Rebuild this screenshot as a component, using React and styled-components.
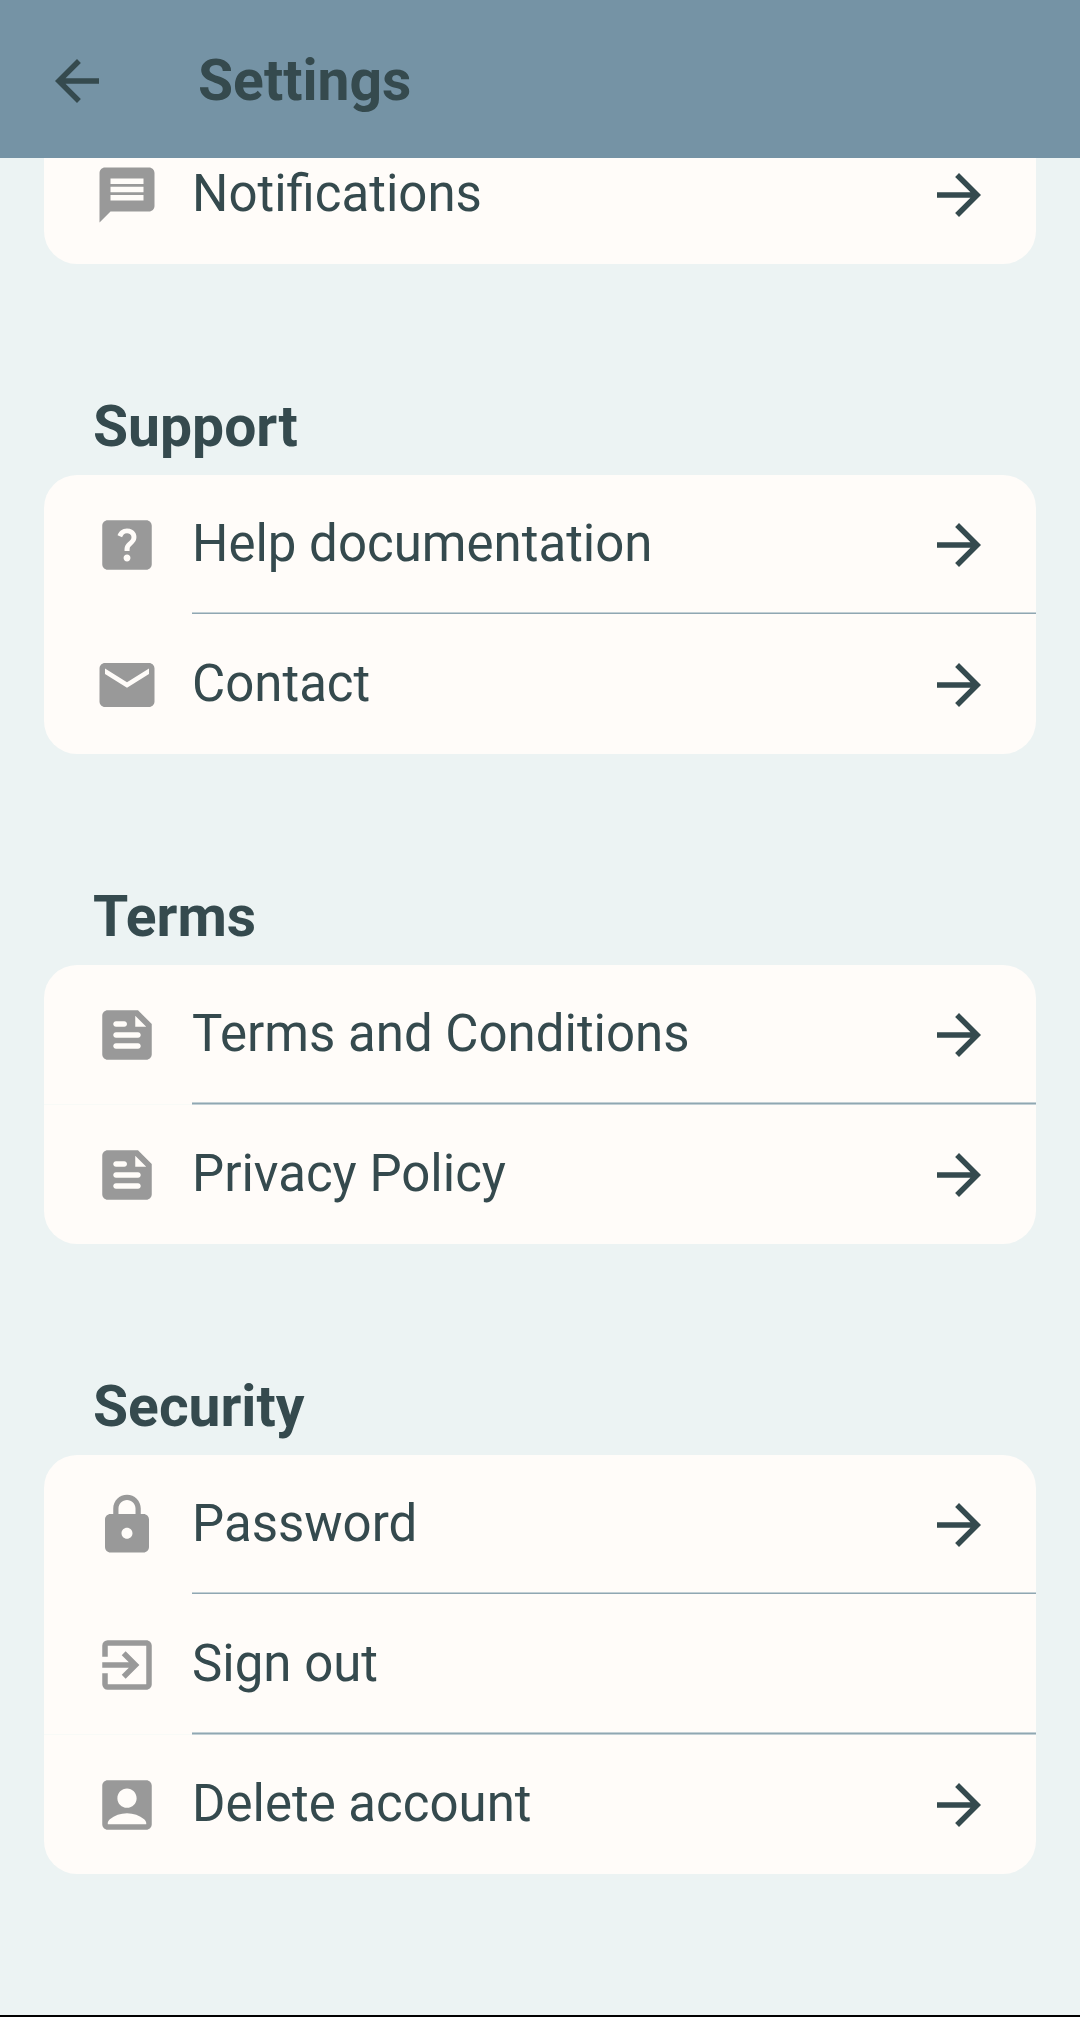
import React from 'react';
import styled, { createGlobalStyle } from 'styled-components';
import {
  MdAccountBox,
  MdArrowBack,
  MdArrowForward,
  MdEmail,
  MdExitToApp,
  MdHelpCenter,
  MdLock,
  MdMessage,
} from 'react-icons/md';

const colors = {
  header: '#7593a5',
  background: '#ecf3f3',
  card: '#fffcf9',
  text: '#354a4e',
  icon: '#999999',
  divider: '#90a7b2',
  dividerSoft: '#c3d0d5',
  seam: '#f8faf7',
};

const DocumentIcon = () => (
  <svg viewBox="0 0 24 24" fill="currentColor" aria-hidden="true">
    <path
      fillRule="evenodd"
      d="M16 3H5c-1.1 0-2 .9-2 2v14c0 1.1.9 2 2 2h14c1.1 0 2-.9 2-2V8l-5-5zM8 7h3c.55 0 1 .45 1 1s-.45 1-1 1H8c-.55 0-1-.45-1-1s.45-1 1-1zm8 10H8c-.55 0-1-.45-1-1s.45-1 1-1h8c.55 0 1 .45 1 1s-.45 1-1 1zm0-4H8c-.55 0-1-.45-1-1s.45-1 1-1h8c.55 0 1 .45 1 1s-.45 1-1 1zm-1-4V5l4 4h-4z"
    />
  </svg>
);

const sections = [
  {
    title: 'Support',
    items: [
      { label: 'Help documentation', icon: MdHelpCenter },
      { label: 'Contact', icon: MdEmail },
    ],
  },
  {
    title: 'Terms',
    items: [
      { label: 'Terms and Conditions', icon: DocumentIcon, thick: true },
      { label: 'Privacy Policy', icon: DocumentIcon },
    ],
  },
  {
    title: 'Security',
    items: [
      { label: 'Password', icon: MdLock },
      { label: 'Sign out', icon: MdExitToApp, action: true, thick: true },
      { label: 'Delete account', icon: MdAccountBox },
    ],
  },
];

const SettingsItem = ({ label, icon: Icon, action, thick }) => (
  <StyledItem $thick={thick}>
    <StyledRow
      as={action ? 'button' : 'a'}
      href={action ? undefined : `#${label.toLowerCase().replace(/ /g, '-')}`}
      type={action ? 'button' : undefined}
    >
      <StyledRowIcon><Icon /></StyledRowIcon>
      <StyledRowLabel>{label}</StyledRowLabel>
      {!action && <StyledRowArrow><MdArrowForward /></StyledRowArrow>}
    </StyledRow>
    <StyledDivider $thick={thick} />
  </StyledItem>
);

const App = () => (
  <StyledPage>
    <GlobalStyle />
    <StyledHeader>
      <StyledBack type="button" aria-label="Back"><MdArrowBack /></StyledBack>
      <StyledTitle>Settings</StyledTitle>
    </StyledHeader>
    <StyledContent>
      <StyledCard>
        <SettingsItem label="Notifications" icon={MdMessage} />
      </StyledCard>
      {sections.map(({ title, items }) => (
        <StyledSection key={title}>
          <StyledSectionTitle>{title}</StyledSectionTitle>
          <StyledCard>
            {items.map(item => <SettingsItem key={item.label} {...item} />)}
          </StyledCard>
        </StyledSection>
      ))}
    </StyledContent>
  </StyledPage>
);

const GlobalStyle = createGlobalStyle`
  * {
    box-sizing: border-box;
  }
  body {
    margin: 0;
    background: ${colors.background};
    color: ${colors.text};
    font-family: Roboto, sans-serif;
  }
`;

const StyledPage = styled.div`
  min-height: 100vh;
  border-bottom: 2px solid #000000;
`;

const StyledHeader = styled.header`
  position: sticky;
  top: 0;
  z-index: 2;
  display: flex;
  align-items: center;
  gap: 88px;
  height: 158px;
  padding: 4px 44px 0;
  background: ${colors.header};
`;

const StyledBack = styled.button`
  display: flex;
  padding: 0;
  border: 0;
  background: none;
  color: inherit;
  font-size: 66px;
  cursor: pointer;
`;

const StyledTitle = styled.h1`
  margin: 0;
  font-size: 57px;
  line-height: 66px;
  font-weight: 700;
`;

/* the list is scrolled a little way under the header */
const StyledContent = styled.main`
  margin-top: -33px;
  padding: 0 44px 141px;
`;

const StyledSection = styled.section`
  padding-top: 130px;
`;

const StyledSectionTitle = styled.h2`
  margin: 0;
  padding: 0 49px 15px;
  font-size: 57px;
  line-height: 66px;
  font-weight: 700;
`;

const StyledCard = styled.ul`
  display: grid;
  gap: 1px;
  margin: 0;
  padding: 0;
  border-radius: 33px;
  background: ${colors.card};
  list-style: none;
  overflow: hidden;
`;

const StyledDivider = styled.div`
  position: absolute;
  left: 148px;
  right: 0;
  bottom: ${props => props.$thick ? '-1px' : '0'};
  height: ${props => props.$thick ? '3px' : '2px'};
  border-top: 1px solid ${colors.dividerSoft};
  border-bottom: ${props => props.$thick ? `1px solid ${colors.dividerSoft}` : '0'};
  background: ${colors.divider};
`;

const StyledItem = styled.li`
  position: relative;
  box-shadow: ${props => props.$thick ? `0 1px ${colors.seam}` : 'none'};
  &:last-child ${StyledDivider} {
    display: none;
  }
`;

const StyledRow = styled.a`
  display: flex;
  align-items: center;
  width: 100%;
  height: 139px;
  padding: 0 44px 0 50px;
  border: 0;
  background: none;
  color: inherit;
  font-family: inherit;
  font-size: 51px;
  line-height: 60px;
  text-align: left;
  text-decoration: none;
  cursor: pointer;
`;

const StyledRowIcon = styled.span`
  display: flex;
  margin-right: 32px;
  color: ${colors.icon};
  font-size: 66px;
  & svg {
    width: 66px;
    height: 66px;
  }
`;

const StyledRowLabel = styled.span`
  flex: 1;
  padding-bottom: 1px;
`;

const StyledRowArrow = styled.span`
  display: flex;
  font-size: 66px;
`;

export default App;
